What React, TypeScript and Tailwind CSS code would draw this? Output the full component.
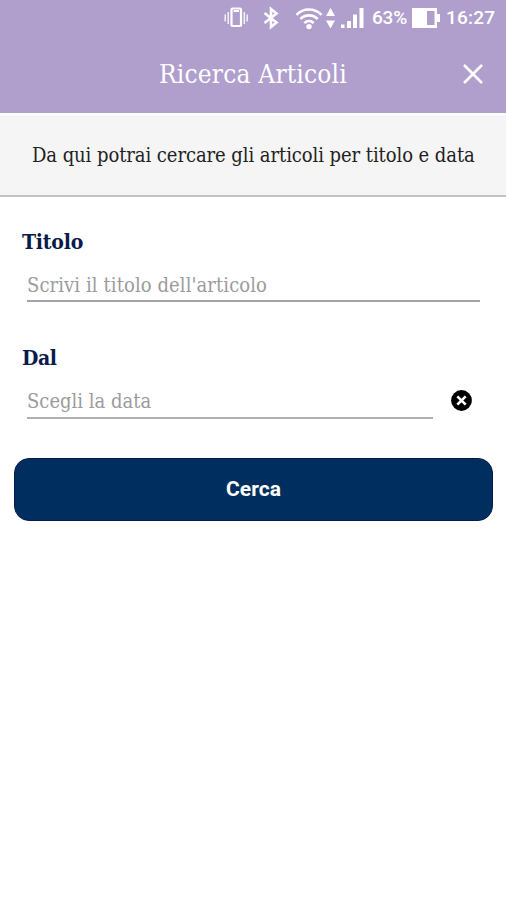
import { useState } from 'react';

const slab = "[font-family:'Roboto_Slab','DejaVu_Serif_Condensed','DejaVu_Serif',serif] [font-stretch:condensed]";
const roboto = '[font-family:Roboto,sans-serif] [font-stretch:normal]';

function StatusBar() {
    return (
        <div className={`h-9 flex items-center justify-end pr-[11px] text-white text-[19px] leading-9 font-medium ${roboto}`}>
            {/* vibrate */}
            <svg width="24" height="22" viewBox="0 0 24 22" fill="none" stroke="white" className="mr-[15px]">
                <rect x="7.5" y="1.5" width="9.5" height="17.5" rx="1" strokeWidth="2.2" />
                <path d="M9.5 4h5.5" strokeWidth="2" />
                <path d="M4.2 5v12M20.3 5v12M1.2 7.5v7M23.2 7.5v7" strokeWidth="1.6" strokeOpacity="0.8" />
            </svg>
            {/* bluetooth */}
            <svg width="16" height="24" viewBox="0 0 16 24" fill="none" stroke="white" strokeWidth="2.6" className="mr-[16px]">
                <path d="M1.5 7l12 9.5L8 21V3l5.5 4.5-12 9.5" />
            </svg>
            {/* wifi */}
            <svg width="28" height="24" viewBox="0 0 28 24" fill="none" stroke="white" strokeWidth="2.6" className="mr-[3px]">
                <path d="M1.5 8.8c7-7 18-7 25 0M5.4 13c4.9-4.9 12.3-4.9 17.2 0M9.3 17.1c2.7-2.7 6.7-2.7 9.4 0" />
                <circle cx="14" cy="20.6" r="2.7" fill="white" stroke="none" />
            </svg>
            <svg width="9" height="22" viewBox="0 0 9 22" fill="white" className="mr-[6px]">
                <path d="M4.5 1L9 9H0zM4.5 21.5L9 13.5H0z" />
            </svg>
            {/* signal */}
            <svg width="23" height="22" viewBox="0 0 23 22" fill="white" className="mr-[8px]">
                <path d="M0 17.5h3.5V21H0zM6 14h4v7H6zM12 7.5h4V21h-4zM18.5 1h4v20h-4z" />
            </svg>
            <span className="w-[37px] whitespace-nowrap tracking-[-0.2px] mr-[3px]">63%</span>
            {/* battery */}
            <svg width="28" height="20" viewBox="0 0 28 20" className="mr-[6px]">
                <path d="M0 0h25v6h3v8h-3v6H0z" fill="white" />
                <path d="M15 3h7.5v14H15z" fill="#b09fcd" />
            </svg>
            <span className="w-[49px] whitespace-nowrap tracking-[0.2px]">16:27</span>
        </div>
    );
}

export default function App() {
    const [title, setTitle] = useState('');
    const [date, setDate] = useState('');

    return (
        <div className={`w-full h-[900px] bg-white overflow-hidden ${slab}`}>
            <header className="h-[113px] bg-[#b09fcd]">
                <StatusBar />
                <div className="h-[77px] flex items-center pl-[159px] pr-[22px] justify-between">
                    <h1 className="text-white text-[26px] leading-[77px] tracking-[0.2px] whitespace-nowrap">Ricerca Articoli</h1>
                    <button aria-label="Chiudi" className="-mt-[2px]">
                        <svg width="22" height="22" viewBox="0 0 22 22" stroke="white" strokeWidth="2.6" className="block">
                            <path d="M2 2l18 18M20 2L2 20" />
                        </svg>
                    </button>
                </div>
            </header>

            <div className="h-[84px] border-t-2 border-t-white border-b-2 border-b-[#c3c3c3] bg-[#f5f5f5] pl-[32px] flex items-center">
                <p className="text-[20px] leading-[80px] tracking-[-0.07px] text-[#222222] whitespace-nowrap">Da qui potrai cercare gli articoli per titolo e data</p>
            </div>

            <main className="pt-[29px] px-[14px]">
                <label className="block pl-[8px] h-[32px] leading-[32px] text-[21px] tracking-[-0.2px] font-bold text-[#081b4b]">Titolo</label>
                <div className="mt-[8px] ml-[13px] mr-[12px] h-[37px] border-b-2 border-[#a4a4a4]">
                    <input
                        className="block w-full h-[40px] -mt-px text-[20px] tracking-[0.09px] outline-none placeholder:text-[#9b9b9b] placeholder:opacity-100"
                        placeholder="Scrivi il titolo dell'articolo"
                        value={title}
                        onChange={(e) => setTitle(e.target.value)}
                    />
                </div>

                <label className="block mt-[40px] pl-[8px] h-[32px] leading-[32px] text-[21px] tracking-[-0.4px] font-bold text-[#081b4b]">Dal</label>
                <div className="mt-[8px] ml-[13px] h-[37px] flex">
                    <div className="w-[406px] h-[37px] border-b-2 border-[#b0b0b0]">
                        <input
                            className="block w-full h-[40px] -mt-px text-[20px] outline-none placeholder:text-[#9b9b9b] placeholder:opacity-100"
                            placeholder="Scegli la data"
                            value={date}
                            onChange={(e) => setDate(e.target.value)}
                        />
                    </div>
                    <button className="ml-[18px] mt-[8px] h-[21px]" aria-label="Cancella data" onClick={() => setDate('')}>
                        <svg width="21" height="21" viewBox="0 0 21 21" className="block">
                            <circle cx="10.5" cy="10.5" r="10.4" fill="black" />
                            <path d="M6.3 6.3l8.4 8.4M14.7 6.3l-8.4 8.4" stroke="white" strokeWidth="2.6" />
                        </svg>
                    </button>
                </div>

                <button className={`block mt-[39px] w-[479px] h-[63px] rounded-[15px] bg-[#002f5f] border border-[#061b4c] text-white text-[21px] font-bold ${roboto}`}>
                    Cerca
                </button>
            </main>
        </div>
    );
}
